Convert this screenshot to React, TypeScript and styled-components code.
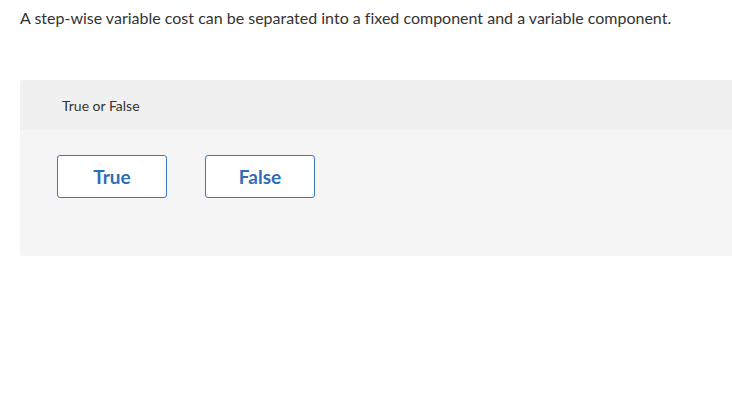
import React from 'react';
import styled, { createGlobalStyle } from 'styled-components';

const GlobalStyle = createGlobalStyle`
  html, body {
    margin: 0;
    padding: 0;
    background: #fff;
    overflow: hidden;
  }
  body {
    font-family: Lato, 'Open Sans', Arial, sans-serif;
    font-variant-ligatures: none;
    color: #333;
  }
`;

const Page = styled.div`
  padding: 8px 0 0 20px;
`;

const Question = styled.p`
  margin: 0;
  font-size: 16px;
  line-height: 20px;
  color: #333;
`;

const Card = styled.section`
  margin-top: 52px;
  border-radius: 3px 0 0 3px;
  overflow: hidden;
  background: #f5f5f5;
`;

const CardHeader = styled.div`
  height: 50px;
  display: flex;
  align-items: center;
  padding-left: 42px;
  background: #f0f0f0;
  font-size: 14px;
  color: #333;
`;

const CardBody = styled.div`
  height: 126px;
  display: flex;
  gap: 38px;
  padding: 25px 0 0 37px;
  box-sizing: border-box;
`;

const Choice = styled.button`
  width: 110px;
  height: 43px;
  border: 1px solid #3a78c3;
  border-radius: 3px;
  background: #fff;
  color: #2f6db5;
  font-family: Lato, 'Open Sans', Arial, sans-serif;
  font-size: 19px;
  font-weight: 700;
  cursor: pointer;
  padding: 0;
`;

export default function App() {
  return (
    <>
      <GlobalStyle />
      <Page>
        <Question>
          A step-wise variable cost can be separated into a fixed component and a variable component.
        </Question>
        <Card>
          <CardHeader>True or False</CardHeader>
          <CardBody>
            <Choice>True</Choice>
            <Choice>False</Choice>
          </CardBody>
        </Card>
      </Page>
    </>
  );
}
